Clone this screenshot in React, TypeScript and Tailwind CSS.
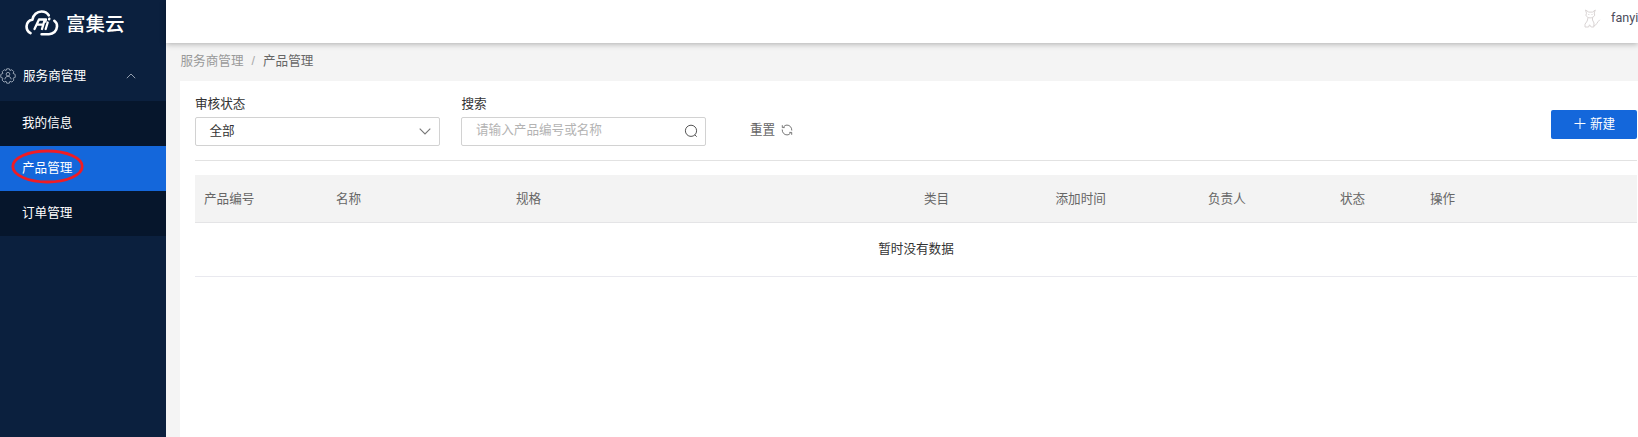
import React from "react";

const menu = [
  { label: "我的信息", active: false },
  { label: "产品管理", active: true },
  { label: "订单管理", active: false },
];

const columns = [
  { label: "产品编号", width: "w-[132px]" },
  { label: "名称", width: "w-[180px]" },
  { label: "规格", width: "w-[408px]" },
  { label: "类目", width: "w-[131.5px]" },
  { label: "添加时间", width: "w-[152.5px]" },
  { label: "负责人", width: "w-[132px]" },
  { label: "状态", width: "w-[90px]" },
  { label: "操作", width: "grow" },
];

function CloudLogo() {
  return (
    <svg width="34" height="26" viewBox="0 0 34 26" fill="none" stroke="#fff" strokeLinecap="round" strokeLinejoin="round">
      <path d="M5.5 23.2C2.6 21.6 1.4 19 1.6 16.2C1.8 12.8 4.2 10.2 7.4 9.7C8.2 4.8 12 1.5 16.5 1.5C19.5 1.5 22.3 3 23.7 5.3" strokeWidth="2.6" />
      <path d="M29.3 10.8C31.3 12.2 32.2 14.3 32 16.7C31.7 21 28.4 24.2 24 24.2H16.6" strokeWidth="2.6" />
      <path d="M9.5 19L14 9.5H21L20.4 11.5M12.5 14.7H18.2M19.5 10.5L17 19M22.7 12.5L20.7 19" strokeWidth="2.3" />
      <path d="M24.3 8.8L24.2 9.2" strokeWidth="2.5" />
    </svg>
  );
}

function GearUser() {
  return (
    <svg width="16" height="16" viewBox="0 0 16 16" fill="none" stroke="#94a0b1" strokeWidth="1">
      <path d="M6.7 0.8H9.3L9.9 2.5L11.8 1.7L13.8 3.7L13.1 5.4L15.2 6.4V9.4L13.1 10.2L13.9 12.1L11.9 14.1L10 13.2L9.3 15.2H6.7L6 13.2L4.1 14.1L2.1 12.1L2.9 10.2L0.8 9.4V6.4L2.9 5.4L2.2 3.7L4.2 1.7L6.1 2.5Z" />
      <circle cx="8" cy="6.2" r="1.8" />
      <path d="M4.8 11.4C5.2 9.200 6.500 8.300 8 8.300S10.800 9.200 11.200 11.400" />
    </svg>
  );
}

function CatAvatar() {
  return (
    <svg width="17" height="20" viewBox="0 0 17 20" fill="none" stroke="#d9d4d4" strokeWidth="1" strokeLinejoin="round">
      <path d="M1.500 1L2.500 4.200L1.900 6.200C2.600 8 4.200 8.900 6.200 8.900S10.100 7.800 10.700 6.200L10.200 4L11.300 1L8.500 3.100H4.800Z" />
      <path d="M4 8.700L3.200 12L1 15.200V18H4.600L5.500 15.800L7.200 18H9.800L10 14L8.500 11V8.500M9.800 17C12.200 16.800 13.200 12.800 15.800 10.800" />
      <path d="M4.300 5.500H5.300M7.500 5.500H8.500" />
    </svg>
  );
}

export default function App() {
  return (
    <div className="flex h-[437px] w-full overflow-hidden bg-[#f4f4f4] font-['Liberation_Sans','Noto_Sans_CJK_SC',sans-serif] text-[12.6px] text-[#333]">
      <aside className="flex w-[166px] shrink-0 flex-col bg-[#0b203e] text-white">
        <div className="flex h-[50px] items-center pl-[25px]">
          <div className="-mt-1">
            <CloudLogo />
          </div>
          <span className="ml-[7px] text-[19.5px] leading-none font-medium">富集云</span>
        </div>
        <div className="flex h-[51px] items-center">
          <GearUser />
          <span className="mt-[2px] ml-[7px] grow">服务商管理</span>
          <svg className="mr-[30px]" width="10" height="6" viewBox="0 0 10 6" fill="none" stroke="#a3adba" strokeWidth="0.9">
            <path d="M0.800 5.200L5 1L9.200 5.200" />
          </svg>
        </div>
        <nav>
          {menu.map((m) => (
            <div key={m.label} className={`flex h-[45px] items-center pl-[22px] ${m.active ? "bg-[#1467db]" : "bg-[#06162c]"}`}>
              <span className="relative">
                {m.label}
                {m.active && (
                  <svg className="absolute -top-[10px] -left-[11.500px]" width="73" height="35" viewBox="0 0 73 35" fill="none">
                    <ellipse cx="36.500" cy="17.500" rx="34.700" ry="15.500" stroke="#f01c24" strokeWidth="2.800" />
                  </svg>
                )}
              </span>
            </div>
          ))}
        </nav>
      </aside>

      <div className="flex min-w-0 grow flex-col">
        <header className="z-10 flex h-[43px] shrink-0 justify-end bg-white shadow-[0_1px_6px_rgba(0,0,0,0.300)]">
          <div className="mt-[9px]">
            <CatAvatar />
          </div>
          <span className="mt-[9px] ml-[10px] w-[27px] shrink-0 whitespace-nowrap font-[Roboto] text-[12.6px] leading-[18px] text-[#4c4c5c]">fanyi</span>
        </header>

        <div className="flex h-[38px] shrink-0 items-center pb-[2px] pl-[14.500px]">
          <span className="text-[#999]">服务商管理</span>
          <span className="mx-[8px] text-[#aaa]">/</span>
          <span className="text-[#666]">产品管理</span>
        </div>

        <main className="ml-[14px] grow bg-white pr-px pl-[15px]">
          <div className="flex h-[80px] border-b border-[#e2e2e2]">
            <div className="w-[245px] pt-[14px]">
              <div className="h-[22px] leading-[19px]">审核状态</div>
              <div className="flex h-[29px] items-center justify-between rounded-[2px] border border-[#d2d2d2] pr-[8px] pl-[13.500px]">
                <span className="-mt-px">全部</span>
                <svg width="12" height="8" viewBox="0 0 12 8" fill="none" stroke="#777" strokeWidth="1.100">
                  <path d="M0.700 0.700L6 6L11.300 0.700" />
                </svg>
              </div>
            </div>
            <div className="ml-[21px] w-[245px] pt-[14px]">
              <div className="h-[22px] pl-[0.500px] leading-[19px]">搜索</div>
              <div className="flex h-[29px] items-center justify-between rounded-[2px] border border-[#d2d2d2] pr-[7px] pl-[14px]">
                <span className="-mt-[2px] text-[#b3b3b3]">请输入产品编号或名称</span>
                <svg className="-mt-px" width="14" height="14" viewBox="0 0 14 14" fill="none" stroke="#555" strokeWidth="1">
                  <circle cx="7" cy="6.800" r="5.600" />
                  <path d="M10.800 10.800L12.700 12.700" />
                </svg>
              </div>
            </div>
            <div className="mt-[36px] ml-[44px] flex h-[27px] items-center text-[#666]">
              <span>重置</span>
              <svg className="-mt-px ml-[6px]" width="12" height="12" viewBox="0 0 12 12" fill="none" stroke="#777" strokeWidth="1">
                <path d="M2.300 3.500C3.200 1.800 4.500 1.100 6 1.100C8.700 1.100 10.800 3.200 10.800 6.500M9.700 8.600C8.800 10.200 7.500 10.900 6 10.900C3.300 10.900 1.200 8.800 1.200 5.500M1.300 1.200V3.600H3.700M10.700 10.800V8.400H8.300" />
              </svg>
            </div>
            <button className="mt-[29px] ml-auto flex h-[29px] w-[86px] items-center rounded-[2px] bg-[#1467db] pl-[23px] text-white">
              <svg className="-mt-[3px]" width="12" height="12" viewBox="0 0 12 12" fill="none" stroke="#fff" strokeWidth="1">
                <path d="M0.500 6.500H11.500M6 1V12" />
              </svg>
              <span className="-mt-px ml-[4px]">新建</span>
            </button>
          </div>

          <div className="mt-[14px] flex h-[48px] items-center border-b border-[#e4e4e6] bg-[#f3f3f3] pt-px pl-[9px] text-[#666]">
            {columns.map((c) => (
              <div key={c.label} className={`shrink-0 ${c.width}`}>
                {c.label}
              </div>
            ))}
          </div>
          <div className="flex h-[54px] items-center justify-center border-b border-[#e9e9ef]">
            <span>暂时没有数据</span>
          </div>
        </main>
      </div>
    </div>
  );
}
